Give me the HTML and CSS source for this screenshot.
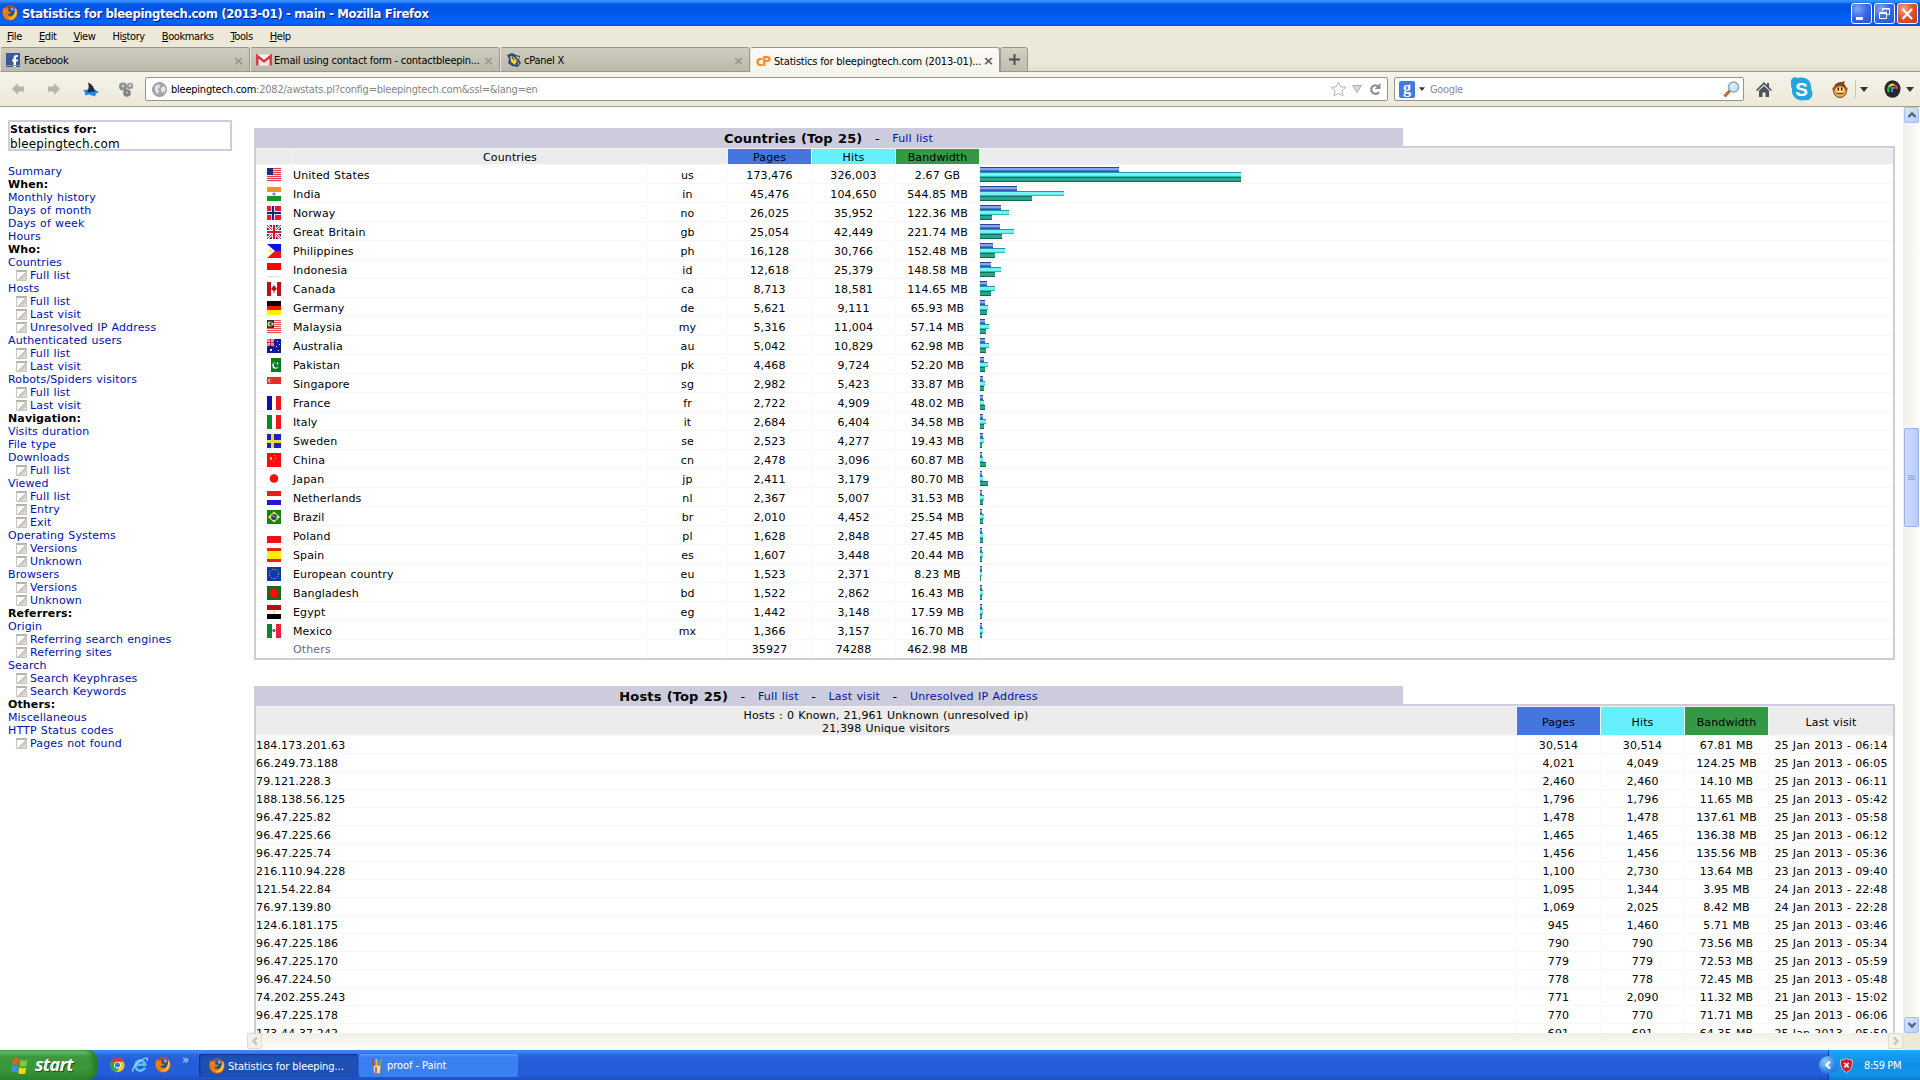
FILE: index.html
```html
<!DOCTYPE html>
<html lang="en">
<head>
  <meta charset="UTF-8" />
  <title>Statistics for bleepingtech.com (2013-01) - main</title>
  <link rel="stylesheet" href="styles.css">
</head>
<body>

  <!-- shared icons -->
  <svg class="defs" width="0" height="0">
    <symbol id="firefox" viewBox="0 0 16 16">
      <circle cx="8" cy="8" r="7.6" fill="#d9570e"/>
      <circle cx="8.4" cy="6.8" r="5.2" fill="#2b4f86"/>
      <path d="M8 3c2-1 4 0 4.500 2L10 6z" fill="#79a7d8"/>
      <path d="M1 3c-1 5 0 9 4 11.500 4 2 9 0 10-5 .5-3 0-5-1.500-7 .5 4-1 8-4.500 8.500-2.500 0-3.500-1-3.500-2l2.500-.5 1.500-1.500-3-.5C6 4.500 6 4 7 3 5 3 4 3.500 3.500 4z" fill="#ee7d14"/>
      <path d="M13.500 2.500c2 4 1.500 8-1.500 10.500-2 1.500-4 1.500-6 .5 4 0 7-3 7.500-11z" fill="#ffc938"/>
    </symbol>
    <symbol id="down" viewBox="0 0 8 5"><path d="M0 0h8L4 5z"/></symbol>
    <symbol id="chev" viewBox="0 0 10 10"><path d="M1.500 7 5 3.500 8.500 7" fill="none" stroke-width="2.400"/></symbol>
  </svg>

  <div class="titlebar">
    <svg class="ico16"><use href="#firefox"/></svg>
    <span class="title">Statistics for bleepingtech.com (2013-01) - main - Mozilla Firefox</span>
    <div class="winbtns">
      <div class="winbtn"><svg width="19" height="20"><path d="M4 13h7v3H4z" fill="#fff"/></svg></div>
      <div class="winbtn"><svg width="19" height="20" fill="none" stroke="#fff"><path d="M7.500 7V4.500h7v6H12M7 5h8"/><path d="M4.500 8.500h7v6h-7zM4 9.500h8"/></svg></div>
      <div class="winbtn close"><svg width="19" height="20"><path d="M4.500 5 14 15M14 5 4.500 15" stroke="#fff" stroke-width="2.200"/></svg></div>
    </div>
  </div>

  <div class="menubar">
    <span><u>F</u>ile</span><span><u>E</u>dit</span><span><u>V</u>iew</span><span>Hi<u>s</u>tory</span><span><u>B</u>ookmarks</span><span><u>T</u>ools</span><span><u>H</u>elp</span>
  </div>

  <div class="tabs">
    <div class="tab">
      <svg class="ico14" viewBox="0 0 14 14"><rect width="14" height="14" fill="#3b5998"/><path d="M7.500 14V8.500H6V6.500h1.500V5c0-2 1-3 2.800-3H12v2h-1c-.8 0-1 .3-1 1v1.500h2L11.700 8.500H10V14z" fill="#fff"/><path d="M0 12.500h14" stroke="#7b92c4"/></svg>
      <span class="label">Facebook</span><span class="x">×</span>
    </div>
    <div class="tab">
      <svg class="ico16" viewBox="0 0 16 16"><path d="M0 2.500h16v11H0z" fill="#f4f1f1"/><path d="M1.300 13.500V4L8 9.500 14.700 4v9.500" fill="none" stroke="#d8323a" stroke-width="2.400"/><path d="M3 13 6.500 9.500M13 13 9.500 9.500" stroke="#ddc8c8"/></svg>
      <span class="label">Email using contact form - contactbleepin...</span><span class="x">×</span>
    </div>
    <div class="tab">
      <svg class="ico16" viewBox="0 0 16 16"><path d="M1 3 6 1l4 2 4 1-1 4 2 3-3 4-6-1-4-3 1-4z" fill="#2a4a86"/><path d="M4 4l4 1 3 4-2 4-4-3zM10 4l3 1-1 3zM11 10l2 1-1 3z" fill="#f6cf3d"/><path d="M6 5l2 3M10 11l2 1" stroke="#1b2440"/></svg>
      <span class="label">cPanel X</span><span class="x">×</span>
    </div>
    <div class="tab active">
      <b class="cp">cP</b>
      <span class="label">Statistics for bleepingtech.com (2013-01)...</span><span class="x">×</span>
    </div>
    <div class="newtab"><svg width="11" height="11"><path d="M5.500 0v11M0 5.500h11" stroke="#4a4f58" stroke-width="2"/></svg></div>
  </div>

  <div class="toolbar">
    <svg class="arrow" viewBox="0 0 14 14"><path d="M7 1 1 7l6 6v-3.500h6v-5H7z" fill="#b7b5ab"/></svg>
    <svg class="arrow" viewBox="0 0 14 14"><path d="M7 1l6 6-6 6v-3.500H1v-5h6z" fill="#b7b5ab"/></svg>
    <svg class="addon" viewBox="0 0 16 16"><path d="M0 9l4-1h8l4 3-3 1-1 3-3-1-3-1-4 1 0-3z" fill="#1d8fe0"/><path d="M5 1c3 1 6 4 7 9l-8 1C6 8 6 4 5 1z" fill="#222c3c"/></svg>
    <svg class="addon" viewBox="0 0 16 16"><circle cx="5" cy="5" r="4" fill="#8d8d8a"/><circle cx="12" cy="4.500" r="3.200" fill="#9b9b98"/><circle cx="9" cy="11.500" r="3.800" fill="#80807d"/><circle cx="5" cy="4.500" r="1.500" fill="#c8c8c4"/><circle cx="12" cy="4" r="1.200" fill="#e0e0dc"/><circle cx="9" cy="11" r="1.200" fill="#b8b8b4"/></svg>
    <div class="urlbar">
      <svg class="ico15" viewBox="0 0 15 15"><circle cx="7.500" cy="7.500" r="6.900" fill="#a9a9a9" stroke="#8d8d8d"/><path d="M3 4l4-2 1 3-2 2 1 3-2 2-2-3zM9 6l3-2 2 3-2 4-3-2z" fill="#e4e4e4"/></svg>
      <span class="url"><em>bleepingtech.com</em>:2082/awstats.pl?config=bleepingtech.com&amp;ssl=&amp;lang=en</span>
      <svg width="17" height="16" viewBox="0 0 17 16"><path d="M8.500 1l2.200 4.700 5.100.6-3.800 3.500 1 5.100-4.500-2.500L4 14.900l1-5.100L1.200 6.300l5.100-.6z" fill="#fff" stroke="#b4b4b4"/></svg>
      <svg class="drop" width="10" height="8" viewBox="0 0 10 8"><path d="M.5.5h9L5 7.500z" fill="#d8d8d8" stroke="#b0b0b0"/></svg>
      <svg width="12" height="13" viewBox="0 0 12 13"><path d="M9.500 3.500A4.300 4.300 0 1 0 10 9" fill="none" stroke="#8b9096" stroke-width="2.200"/><path d="M11.500 0v6h-6z" fill="#8b9096"/></svg>
    </div>
    <div class="searchbar">
      <span class="g">g</span>
      <svg class="tiny"><use href="#down"/></svg>
      <span class="hint">Google</span>
      <svg width="17" height="17" viewBox="0 0 17 17"><path d="M1.500 15.500 7 9.500" stroke="#b86b35" stroke-width="3"/><circle cx="10.500" cy="6" r="5" fill="#cfe8fa" stroke="#8fa9bd" stroke-width="1.600"/><path d="M8 5c.5-1.500 2-2 3-2" stroke="#fff" fill="none"/></svg>
    </div>
    <div class="tools">
      <svg width="16" height="15" viewBox="0 0 16 15"><path d="M8 0 0 8l1.200 1L8 2.600 14.800 9 16 8l-3-3V1h-2v2z" fill="#4c545e"/><path d="M3 8.500 8 4l5 4.500V15H9.500v-4.500h-3V15H3z" fill="#4c545e"/></svg>
      <svg class="skype" width="23" height="24" viewBox="0 0 23 24"><path d="M1 6C0 2 4-1 8 1c8-2 14 3 13 11 4 6-1 13-6 11C7 25 1 19 2 12 1 10 1 8 1 6z" fill="#24a5de"/><text x="11.500" y="18.500" text-anchor="middle">S</text></svg>
      <svg class="monkey" width="16" height="17" viewBox="0 0 16 17"><circle cx="2.200" cy="8" r="2" fill="#a5652a"/><circle cx="13.800" cy="8" r="2" fill="#a5652a"/><path d="M2 7c0-5 5-6 8-6l3-1-1 3c2 1 2 3 2 5z" fill="#8a4513"/><ellipse cx="8" cy="10.500" rx="6.300" ry="6" fill="#f0a94c" stroke="#7c4414"/><path d="M4 8.500c0-3 8-3 8 0l-1 3H5z" fill="#ffdd9b"/><path d="M6.300 6.500v3M9.700 6.500v3" stroke="#2c1a08" stroke-width="1.500"/><path d="M4.500 12.500h7" stroke="#6b3a12"/></svg>
      <i class="sep"></i>
      <svg class="tiny big"><use href="#down"/></svg>
      <svg class="wheel" width="17" height="18" viewBox="0 0 17 18"><ellipse cx="8.500" cy="9" rx="8" ry="8.700" fill="#26282e"/><path d="M5 12a4 4 0 0 1 0-5" stroke="#1fc53a" stroke-width="2" fill="none"/><path d="M5 7a4 4 0 0 1 5-2" stroke="#f1da24" stroke-width="2" fill="none"/><path d="M10 5a4 4 0 0 1 3 4" stroke="#f0433b" stroke-width="2" fill="none"/><path d="M8 12V8h3" stroke="#3b8df2" stroke-width="2" fill="none"/></svg>
      <svg class="tiny big"><use href="#down"/></svg>
    </div>
  </div>

  <div class="page">
    <div class="sidebar">
      <div class="sitebox"><b>Statistics for:</b><br>bleepingtech.com</div>
      <ul class="nav">
        <li><a>Summary</a></li>
        <li class="head">When:</li>
        <li><a>Monthly history</a></li>
        <li><a>Days of month</a></li>
        <li><a>Days of week</a></li>
        <li><a>Hours</a></li>
        <li class="head">Who:</li>
        <li><a>Countries</a></li>
        <li class="sub"><a>Full list</a></li>
        <li><a>Hosts</a></li>
        <li class="sub"><a>Full list</a></li>
        <li class="sub"><a>Last visit</a></li>
        <li class="sub"><a>Unresolved IP Address</a></li>
        <li><a>Authenticated users</a></li>
        <li class="sub"><a>Full list</a></li>
        <li class="sub"><a>Last visit</a></li>
        <li><a>Robots/Spiders visitors</a></li>
        <li class="sub"><a>Full list</a></li>
        <li class="sub"><a>Last visit</a></li>
        <li class="head">Navigation:</li>
        <li><a>Visits duration</a></li>
        <li><a>File type</a></li>
        <li><a>Downloads</a></li>
        <li class="sub"><a>Full list</a></li>
        <li><a>Viewed</a></li>
        <li class="sub"><a>Full list</a></li>
        <li class="sub"><a>Entry</a></li>
        <li class="sub"><a>Exit</a></li>
        <li><a>Operating Systems</a></li>
        <li class="sub"><a>Versions</a></li>
        <li class="sub"><a>Unknown</a></li>
        <li><a>Browsers</a></li>
        <li class="sub"><a>Versions</a></li>
        <li class="sub"><a>Unknown</a></li>
        <li class="head">Referrers:</li>
        <li><a>Origin</a></li>
        <li class="sub"><a>Referring search engines</a></li>
        <li class="sub"><a>Referring sites</a></li>
        <li><a>Search</a></li>
        <li class="sub"><a>Search Keyphrases</a></li>
        <li class="sub"><a>Search Keywords</a></li>
        <li class="head">Others:</li>
        <li><a>Miscellaneous</a></li>
        <li><a>HTTP Status codes</a></li>
        <li class="sub"><a>Pages not found</a></li>
      </ul>
    </div>

    <div class="main">
      <div class="report">
        <div class="section-title"><b>Countries (Top 25)</b><i>-</i><a>Full list</a></div>
        <table class="stats countries">
          <colgroup><col class="c-flag"><col class="c-name"><col class="c-code"><col class="c-num"><col class="c-num"><col class="c-num"><col></colgroup>
          <thead>
            <tr><th></th><th colspan="2">Countries</th><th class="pages">Pages</th><th class="hits">Hits</th><th class="bw">Bandwidth</th><th></th></tr>
          </thead>
          <tbody id="countries"></tbody>
        </table>

        <div class="section-title second"><b>Hosts (Top 25)</b><i>-</i><a>Full list</a><i>-</i><a>Last visit</a><i>-</i><a>Unresolved IP Address</a></div>
        <table class="stats hosts">
          <colgroup><col><col class="c-num"><col class="c-num"><col class="c-num"><col class="c-last"></colgroup>
          <thead>
            <tr><th>Hosts : 0 Known, 21,961 Unknown (unresolved ip)<br>21,398 Unique visitors</th><th class="pages">Pages</th><th class="hits">Hits</th><th class="bw">Bandwidth</th><th>Last visit</th></tr>
          </thead>
          <tbody id="hosts"></tbody>
        </table>
      </div>
      <div class="vscroll">
        <div class="sbtn"><svg width="10" height="10"><use href="#chev"/></svg></div>
        <div class="thumb"><span>≡</span></div>
        <div class="sbtn flip"><svg width="10" height="10"><use href="#chev"/></svg></div>
      </div>
      <div class="hscroll">
        <div class="sbtn off left"><svg width="10" height="10"><use href="#chev"/></svg></div>
        <div class="sbtn off right"><svg width="10" height="10"><use href="#chev"/></svg></div>
      </div>
      <div class="corner"></div>
    </div>
  </div>

  <div class="taskbar">
    <div class="start">
      <svg width="18" height="18" viewBox="0 0 18 18"><path d="M2 3c2-1.500 4-1.500 6 0L7 9C5 7.500 3 7.500 1 9z" fill="#e9582b"/><path d="M9.500 3.500c2 1.500 4 1.500 7 .5l-1 6c-2.500 1-5 1-7-.5z" fill="#86c440"/><path d="M.8 10.500c2-1.500 4-1.500 6 0l-1 6C4 15 2 15 0 16.500z" fill="#4a8fe8"/><path d="M8.200 11c2 1.500 4.500 1.500 7 .5l-1 6c-2.500 1-5 1-7-.5z" fill="#fbd12c"/></svg>
      <span>start</span>
    </div>
    <div class="quick">
      <svg width="15" height="16" viewBox="0 0 16 16"><circle cx="8" cy="8" r="7.600" fill="#f6c81d"/><path d="M8 8 1.300 4.200A7.600 7.600 0 0 1 14.800 4.500H8z" fill="#dd3a2c"/><path d="M1.300 4.200A7.600 7.600 0 0 0 7 15.500L10.500 9.500 8 8z" fill="#33a04b"/><circle cx="8" cy="8" r="3.600" fill="#fff"/><circle cx="8" cy="8" r="2.700" fill="#3c79d0"/></svg>
      <svg width="16" height="16" viewBox="0 0 16 16"><path d="M13 10.500A5 5 0 1 1 13.300 7.800H4" fill="none" stroke="#5fc0f7" stroke-width="2.600"/><path d="M1 14.500C-1 12 8 2 14 1c2 0 1.500 2 1 3" fill="none" stroke="#a7dcfb" stroke-width="1.200"/></svg>
      <svg width="16" height="16"><use href="#firefox"/></svg>
      <span class="more">»</span>
    </div>
    <div class="task on"><svg class="ico16"><use href="#firefox"/></svg><span>Statistics for bleeping...</span></div>
    <div class="task"><svg class="ico16" viewBox="0 0 16 16"><path d="M4 7h8l-1 8.500H5z" fill="#e8dfc8" stroke="#8d7b54" stroke-width=".7"/><path d="M5 8 3 1" stroke="#c8452f" stroke-width="2"/><path d="M7.500 8V1" stroke="#e9b940" stroke-width="2"/><path d="M10 8l2.500-7" stroke="#6fae4c" stroke-width="2"/><path d="M7 9v6" stroke="#c43a2a" stroke-width="1.500"/></svg><span>proof - Paint</span></div>
    <div class="tray">
      <div class="expand"><svg width="10" height="10"><use href="#chev"/></svg></div>
      <svg width="13" height="15" viewBox="0 0 13 15"><path d="M6.500.5c2 1.200 4 1.500 6 1.500 0 6-1 10-6 12.500C1.500 12 .5 8 .5 2c2 0 4-.3 6-1.500z" fill="#c8202a" stroke="#d9b9bd"/><path d="M4.300 5l4.400 4.400M8.700 5 4.300 9.400" stroke="#fff" stroke-width="1.700"/></svg>
      <span class="clock">8:59 PM</span>
    </div>
  </div>

<script src="script.js"></script>
</body>
</html>
```
FILE: styles.css
```css
* {
  box-sizing: border-box;
}

body {
  margin: 0;
  width: 1920px;
  height: 1080px;
  overflow: hidden;
  display: flex;
  flex-direction: column;
  background: #fff;
  font: 11px "DejaVu Sans", Verdana, sans-serif;
  color: #000;
}

svg {
  flex: none;
  display: block;
}

.defs {
  position: absolute;
}

.ico14 { width: 14px; height: 14px; }
.ico15 { width: 15px; height: 15px; }
.ico16 { width: 16px; height: 16px; }

.titlebar, .menubar, .tabs, .toolbar, .taskbar {
  display: flex;
  flex: none;
  font-family: "DejaVu Sans Condensed", Tahoma, sans-serif;
  white-space: nowrap;
}

/* title bar */
.titlebar {
  height: 26px;
  padding: 0 2px;
  align-items: center;
  background: linear-gradient(#3b94ff 0, #2a86fb 2px, #0458e6 4px, #0054e3 9px, #0061fd 20px, #0066ff 23px, #0047d4 26px);
}

.title {
  margin-left: 4px;
  font-size: 13px;
  font-weight: bold;
  letter-spacing: -0.36px;
  color: #fff;
  text-shadow: 1px 1px #0a1883;
}

.winbtns {
  display: flex;
  gap: 2px;
  margin-left: auto;
}

.winbtn {
  width: 21px;
  height: 21px;
  border: 1px solid #fff;
  border-radius: 3px;
  background: radial-gradient(circle at 30% 25%, #7ea4f5, #3467e2 50%, #2456d4);
}

.winbtn.close {
  background: radial-gradient(circle at 30% 25%, #f0a184, #df502c 50%, #c63a13);
}

.menubar {
  height: 21px;
  padding: 0 7px;
  gap: 17px;
  align-items: center;
  background: #ece9d8;
  letter-spacing: -0.4px;
}

/* tabs */
.tabs {
  height: 25px;
  background: linear-gradient(#ece9d8 60%, #e1decf);
  box-shadow: inset 0 -1px #9b988b;
}

.tab {
  display: flex;
  align-items: center;
  width: 250px;
  padding: 1px 5px 0 5px;
  border: 1px solid #9b988b;
  border-left-color: #e5e3d6;
  border-radius: 3px 3px 0 0;
  background: linear-gradient(#cfcdc0, #bbb9ab);
}

.tab .label {
  flex: 1;
  margin-left: 2px;
  padding-top: 1px;
  letter-spacing: -0.25px;
}

.tab .ico14 + .label {
  margin-left: 4px;
}

.tab .x {
  font: bold 13px "DejaVu Sans", sans-serif;
  color: #96958c;
}

.tab.active {
  border-bottom: 0;
  background: linear-gradient(#fbfaf6, #f5f4ec);
}

.tab.active .label {
  letter-spacing: -0.19px;
}

.tab.active .x {
  color: #55565a;
}

.cp {
  width: 16px;
  font: bold 14px "DejaVu Sans Condensed", sans-serif;
  letter-spacing: -1.5px;
  color: #f78d2b;
}

.newtab {
  display: flex;
  align-items: center;
  justify-content: center;
  width: 28px;
  border: 1px solid #9b988b;
  border-radius: 3px 3px 0 0;
  background: linear-gradient(#d3d1c4, #bfbdb0);
}

/* navigation toolbar */
.toolbar {
  height: 35px;
  padding-left: 11px;
  align-items: center;
  background: linear-gradient(#f5f4ec, #ece9d8);
  border-bottom: 1px solid #a09d8e;
}

.arrow {
  width: 14px;
  height: 14px;
  margin-right: 22px;
}

.addon {
  width: 16px;
  height: 17px;
  margin-right: 19px;
}

.urlbar, .searchbar {
  display: flex;
  align-items: center;
  height: 24px;
  border: 1px solid #97948a;
  border-radius: 2px;
  background: #fff;
}

.urlbar {
  width: 1243px;
  margin-left: -8px;
  padding: 0 6px;
}

.url {
  flex: 1;
  margin-left: 4px;
  padding-top: 1px;
  color: #858585;
  letter-spacing: -0.23px;
}

.url em {
  font-style: normal;
  color: #000;
}

.drop {
  margin: 0 7px 0 5px;
}

.searchbar {
  width: 350px;
  margin-left: 6px;
  padding: 0 3px 0 4px;
}

.g {
  width: 16px;
  height: 17px;
  border-radius: 2px;
  background: #3f7be8;
  color: #fff;
  font: bold 16px/13px "Liberation Serif", serif;
  text-align: center;
}

.tiny {
  width: 6px;
  height: 4px;
  margin: 0 5px 0 4px;
  fill: #333;
}

.tiny.big {
  width: 8px;
  height: 5px;
  margin: 0;
}

.hint {
  flex: 1;
  padding-top: 1px;
  color: #8c8c8c;
  letter-spacing: -0.35px;
}

.tools {
  display: flex;
  align-items: center;
  margin-left: 12px;
}

.skype {
  margin: 0 19px 0 18px;
}

.skype text {
  font: bold 19px "Liberation Sans", sans-serif;
  fill: #fff;
}

.sep {
  width: 1px;
  height: 18px;
  margin: 0 4px 0 7px;
  background: #c9c6b7;
}

.wheel {
  margin: 0 5px 0 16px;
}

/* page */
.page {
  display: flex;
  height: 943px;
  letter-spacing: 0.13px;
  word-spacing: 0.5px;
}

.sidebar {
  width: 247px;
  padding: 13px 0 0 8px;
}

a {
  color: #0011aa;
}

.sitebox {
  width: 224px;
  height: 31px;
  border: 2px solid #ccccdd;
  font-size: 12px;
  line-height: 14px;
}

.sitebox b {
  font-size: 11px;
}

.nav {
  margin: 14px 0 0;
  padding: 0;
  list-style: none;
}

.nav li {
  display: flex;
  align-items: center;
  height: 13px;
  line-height: 13px;
}

.nav .head {
  font-weight: bold;
}

.nav .sub::before {
  content: "";
  width: 9px;
  height: 8px;
  margin: 0 3px 0 8px;
  border: 1px solid #c8c8c0;
  border-top: 2px solid #b4b4ac;
  background: linear-gradient(135deg, #fff 50%, #c2c2ba 51%, #e8e8e2);
}

.main {
  display: grid;
  grid-template-columns: 1656px 17px;
  grid-template-rows: 926px 17px;
}

.report {
  padding: 21px 8px 0 7px;
  overflow: hidden;
}

.section-title {
  display: flex;
  justify-content: center;
  align-items: center;
  width: 1149px;
  height: 18px;
  padding-top: 2px;
  background: #ccccdd;
}

.section-title.second {
  margin-top: 26px;
}

.section-title b {
  font-size: 13px;
}

.section-title i {
  margin: 0 12.5px;
  font-style: normal;
  font-size: 13px;
}

.section-title a {
  letter-spacing: 0.2px;
}

.stats {
  width: 1641px;
  table-layout: fixed;
  border: 2px solid #ccccdd;
  border-collapse: separate;
  border-spacing: 0;
}

.c-flag { width: 37px; }
.c-name { width: 355px; }
.c-code { width: 80px; }
.c-num { width: 84px; }
.c-last { width: 124px; }

th, td {
  padding: 2px 0 0;
  border-right: 1px solid #f9f9f9;
  border-bottom: 1px solid #f7f7f7;
  line-height: 13px;
  text-align: center;
  white-space: nowrap;
}

th {
  height: 17px;
  border-top: 1px solid #f4f4f6;
  border-right-color: #f4f4f4;
  background: #ececec;
  font-weight: normal;
}

th:last-child, td:last-child {
  border-right: 0;
}

td {
  height: 19px;
}

.hosts th { height: 30px; }
.hosts td { height: 18px; }

.pages { background: #4477dd; }
.hits { background: #66f0ff; }
.bw { background: #339944; }

td.left {
  text-align: left;
}

.flag {
  width: 14px;
  height: 14px;
  margin: -1px auto 0 11px;
}

td.graph {
  vertical-align: top;
}

.bar {
  height: 5px;
}

.bar.p { background: linear-gradient(#2a4593 1px, #86a5ee 1px, #86a5ee 3px, #5c85dd 3px, #3a63b8 4px, #1d4d9e); }
.bar.h { background: linear-gradient(#22979c 1px, #7cf6f6 1px, #6cf0f0 4px, #2fbcc0 4px); }
.bar.k { background: linear-gradient(#0d6e63 1px, #27ab8b 1px, #27a383 4px, #0b6a52 4px); }

.others td {
  height: 18px;
  padding-top: 0;
  border-bottom: 0;
}

.others td.left {
  color: #666688;
}

/* scrollbars */
.vscroll {
  display: flex;
  flex-direction: column;
  justify-content: space-between;
  align-items: center;
  background: linear-gradient(90deg, #f0efe8, #fdfdf9);
  padding: 0 1px 0 1px;
}

.sbtn {
  display: flex;
  align-items: center;
  justify-content: center;
  width: 15px;
  height: 16px;
  border: 1px solid #a9bdef;
  border-radius: 2px;
  background: linear-gradient(135deg, #dbe6ff, #b7cbf8);
  stroke: #4d6185;
}

.flip svg { transform: rotate(180deg); }
.left svg { transform: rotate(-90deg); }
.right svg { transform: rotate(90deg); }

.thumb {
  width: 15px;
  height: 99px;
  margin-top: 198px;
  margin-bottom: 383px;
  border: 1px solid #98b1ec;
  border-radius: 2px;
  background: linear-gradient(90deg, #cddbfe, #b9cbf7);
  color: #8ca5df;
  text-align: center;
  line-height: 98px;
}

.hscroll {
  display: flex;
  justify-content: space-between;
  background: linear-gradient(#f0efe8, #fdfdf9);
}

.sbtn.off {
  border-color: #dedbcd;
  background: #f3f1e8;
  stroke: #c7c5b9;
}

.corner {
  background: #ece9d8;
}

/* taskbar */
.taskbar {
  height: 30px;
  align-items: stretch;
  color: #fff;
  background: linear-gradient(#3f7fe8 0, #3a84f0 2px, #2a66dd 5px, #245edb 12px, #245edb 24px, #1e4fbf 30px);
}

.start {
  display: flex;
  align-items: center;
  width: 97px;
  padding-left: 11px;
  border-radius: 0 9px 9px 0;
  background: linear-gradient(#5fae5f 0, #76bf74 2px, #3c9a3c 6px, #379637 20px, #2f852f 30px);
  box-shadow: inset -4px 0 4px #2a7a2a;
}

.start span {
  margin: -2px 0 0 6px;
  font: italic bold 18px "Open Sans", sans-serif;
  letter-spacing: -0.7px;
  text-shadow: 1px 1px 1px #1d4a1d;
}

.quick {
  display: flex;
  align-items: center;
  gap: 7px;
  width: 102px;
  padding-left: 13px;
}

.more {
  margin: -12px 0 0 4px;
  font-size: 13px;
  color: #c8dcff;
}

.task {
  display: flex;
  align-items: center;
  width: 159px;
  margin: 4px 1px 3px 0;
  padding-left: 10px;
  border-radius: 2px;
  background: linear-gradient(#5a9bff, #3c81f3 3px, #3a7ff0);
}

.task.on {
  background: #1d50b5;
  box-shadow: inset 1px 1px 2px #10317c;
}

.task span {
  margin-left: 2px;
  letter-spacing: -0.06px;
}

.task.on span {
  margin-left: 3px;
  padding-top: 1px;
}

.tray {
  display: flex;
  align-items: center;
  width: 92px;
  margin-left: auto;
  background: linear-gradient(#1cb0f2 0, #17a0ee 3px, #1290e8 14px, #1191e9 25px, #0f7bd0 30px);
  border-left: 1px solid #123f9c;
}

.expand {
  display: flex;
  align-items: center;
  justify-content: center;
  width: 18px;
  height: 18px;
  margin: 0 3px 0 -10px;
  border-radius: 50%;
  background: radial-gradient(circle at 35% 30%, #8fc9fb, #2b84e6 60%, #1a64cc);
  stroke: #fff;
}

.expand svg {
  transform: rotate(-90deg);
}

.clock {
  margin-left: 11px;
  letter-spacing: -0.4px;
}
```
FILE: script.js
```js
const countries = [
  ['us', 'United States', 173476, 326003, '2.67 GB'],
  ['in', 'India', 45476, 104650, '544.85 MB'],
  ['no', 'Norway', 26025, 35952, '122.36 MB'],
  ['gb', 'Great Britain', 25054, 42449, '221.74 MB'],
  ['ph', 'Philippines', 16128, 30766, '152.48 MB'],
  ['id', 'Indonesia', 12618, 25379, '148.58 MB'],
  ['ca', 'Canada', 8713, 18581, '114.65 MB'],
  ['de', 'Germany', 5621, 9111, '65.93 MB'],
  ['my', 'Malaysia', 5316, 11004, '57.14 MB'],
  ['au', 'Australia', 5042, 10829, '62.98 MB'],
  ['pk', 'Pakistan', 4468, 9724, '52.20 MB'],
  ['sg', 'Singapore', 2982, 5423, '33.87 MB'],
  ['fr', 'France', 2722, 4909, '48.02 MB'],
  ['it', 'Italy', 2684, 6404, '34.58 MB'],
  ['se', 'Sweden', 2523, 4277, '19.43 MB'],
  ['cn', 'China', 2478, 3096, '60.87 MB'],
  ['jp', 'Japan', 2411, 3179, '80.70 MB'],
  ['nl', 'Netherlands', 2367, 5007, '31.53 MB'],
  ['br', 'Brazil', 2010, 4452, '25.54 MB'],
  ['pl', 'Poland', 1628, 2848, '27.45 MB'],
  ['es', 'Spain', 1607, 3448, '20.44 MB'],
  ['eu', 'European country', 1523, 2371, '8.23 MB'],
  ['bd', 'Bangladesh', 1522, 2862, '16.43 MB'],
  ['eg', 'Egypt', 1442, 3148, '17.59 MB'],
  ['mx', 'Mexico', 1366, 3157, '16.70 MB']
];

const hosts = [
  ['184.173.201.63', '30,514', '30,514', '67.81 MB', '25 Jan 2013 - 06:14'],
  ['66.249.73.188', '4,021', '4,049', '124.25 MB', '25 Jan 2013 - 06:05'],
  ['79.121.228.3', '2,460', '2,460', '14.10 MB', '25 Jan 2013 - 06:11'],
  ['188.138.56.125', '1,796', '1,796', '11.65 MB', '25 Jan 2013 - 05:42'],
  ['96.47.225.82', '1,478', '1,478', '137.61 MB', '25 Jan 2013 - 05:58'],
  ['96.47.225.66', '1,465', '1,465', '136.38 MB', '25 Jan 2013 - 06:12'],
  ['96.47.225.74', '1,456', '1,456', '135.56 MB', '25 Jan 2013 - 05:36'],
  ['216.110.94.228', '1,100', '2,730', '13.64 MB', '23 Jan 2013 - 09:40'],
  ['121.54.22.84', '1,095', '1,344', '3.95 MB', '24 Jan 2013 - 22:48'],
  ['76.97.139.80', '1,069', '2,025', '8.42 MB', '24 Jan 2013 - 22:28'],
  ['124.6.181.175', '945', '1,460', '5.71 MB', '25 Jan 2013 - 03:46'],
  ['96.47.225.186', '790', '790', '73.56 MB', '25 Jan 2013 - 05:34'],
  ['96.47.225.170', '779', '779', '72.53 MB', '25 Jan 2013 - 05:59'],
  ['96.47.224.50', '778', '778', '72.45 MB', '25 Jan 2013 - 05:48'],
  ['74.202.255.243', '771', '2,090', '11.32 MB', '21 Jan 2013 - 15:02'],
  ['96.47.225.178', '770', '770', '71.71 MB', '25 Jan 2013 - 06:06'],
  ['173.44.37.242', '691', '691', '64.35 MB', '25 Jan 2013 - 05:50']
];

// small helpers for the 14x14 flags
const r = (x, y, w, h, c) => `<rect x="${x}" y="${y}" width="${w}" height="${h}" fill="${c}"/>`;
const rows3 = (a, b, c) => r(0, 0, 14, 5, a) + r(0, 5, 14, 4, b) + r(0, 9, 14, 5, c);
const cols3 = (a, b, c) => r(0, 0, 5, 14, a) + r(5, 0, 4, 14, b) + r(9, 0, 5, 14, c);
const stripes = c => [0, 2, 4, 6, 8, 10, 12].map(y => r(0, y, 14, 1, c)).join('');
const jack = '<path d="M0 0 14 14M14 0 0 14" stroke="#fff" stroke-width="3"/><path d="M0 0 14 14M14 0 0 14" stroke="#d22030"/>' +
  '<path d="M7 0v14M0 7h14" stroke="#fff" stroke-width="4"/><path d="M7 0v14M0 7h14" stroke="#d8142a" stroke-width="2.2"/>';

const flags = {
  us: r(0, 0, 14, 14, '#fbd9d9') + stripes('#e0404a') + r(0, 0, 6, 7, '#1c2a8c'),
  in: rows3('#f7941e', '#fff', '#0f9b1e') + '<circle cx="7" cy="7" r="1.6" fill="#6a7fc8"/>',
  no: r(0, 0, 14, 14, '#e0202c') + r(4, 0, 4, 14, '#e8dfe8') + r(0, 5, 14, 4, '#e8dfe8') + r(5, 0, 2, 14, '#1c2280') + r(0, 6, 14, 2, '#1c2280'),
  gb: r(0, 0, 14, 14, '#22307f') + jack,
  ph: r(0, 0, 14, 7, '#0814d8') + r(0, 7, 14, 7, '#f0101a') + '<path d="M0 0v14l8-7z" fill="#fffde0"/><circle cx="3" cy="7" r="1.3" fill="#f5e04a"/>',
  id: r(0, 0, 14, 7, '#ff0000') + r(0, 7, 14, 7, '#fff') + r(0, 13, 14, 1, '#ddd'),
  ca: cols3('#c01020', '#fff', '#c01020') + r(4, 0, 1, 14, '#fff') + r(9, 0, 1, 14, '#fff') + '<path d="M7 3l3 4-2.500 2v2h-1V9L4 7z" fill="#c01020"/>',
  de: rows3('#100404', '#f01414', '#fff200'),
  my: r(0, 0, 14, 14, '#fde4e4') + stripes('#e85050') + r(0, 0, 7, 8, '#26305e') + '<circle cx="3" cy="4" r="2.500" fill="#f5e33a"/><circle cx="4" cy="4" r="1.700" fill="#26305e"/><circle cx="5.500" cy="4" r="1.200" fill="#f5e33a"/>',
  au: r(0, 0, 14, 14, '#10189a') + `<g transform="scale(.5)">${jack}</g>` + r(3, 10, 2, 2, '#dfe3ff') + r(10, 2, 1, 1, '#fff') + r(12, 5, 1, 1, '#fff') + r(9, 7, 1, 1, '#fff') + r(11, 11, 1, 1, '#fff'),
  pk: r(0, 0, 4, 14, '#fff') + r(4, 0, 10, 14, '#0a7a20') + '<circle cx="8.500" cy="7.500" r="3.200" fill="#fff"/><circle cx="9.500" cy="6.700" r="2.800" fill="#0a7a20"/><circle cx="10.500" cy="5.500" r=".9" fill="#fff"/>',
  sg: r(0, 0, 14, 7, '#e0302a') + '<circle cx="3" cy="3.500" r="1.900" fill="#f6c4c0"/><circle cx="4" cy="3.500" r="1.500" fill="#e0302a"/>',
  fr: cols3('#0a12a8', '#fff', '#f01818'),
  it: cols3('#0a8a24', '#fff', '#f01818'),
  se: r(0, 0, 14, 14, '#2020c8') + r(4, 0, 3, 14, '#e8d848') + r(0, 6, 14, 3, '#e8d848'),
  cn: r(0, 0, 14, 14, '#f80c0c') + r(3, 4, 2, 3, '#ffd820') + r(7, 2, 1, 1, '#ffb020') + r(8, 4, 1, 1, '#ffb020') + r(8, 6, 1, 1, '#ffb020') + r(6, 8, 1, 1, '#ffb020'),
  jp: '<circle cx="7" cy="6.500" r="4.300" fill="#f80c0c"/>',
  nl: rows3('#f01818', '#fff', '#2a14d8'),
  br: r(0, 0, 14, 14, '#0f8418') + '<path d="M7 1.500 13 7l-6 5.500L1 7z" fill="#f0ea3c"/><circle cx="7" cy="7" r="3" fill="#1c3c8c"/><path d="M4.500 6c2-.5 3.500 0 5 2" stroke="#fff" stroke-width=".6" fill="none"/>',
  pl: r(0, 7, 14, 7, '#f01010'),
  es: r(0, 0, 14, 14, '#e02810') + r(0, 3, 14, 8, '#ffee10'),
  eu: r(0, 0, 14, 14, '#0c38a8') + '<circle cx="7" cy="7" r="4.600" fill="none" stroke="#d8d860" stroke-dasharray="1 1.4"/>',
  bd: r(0, 0, 14, 14, '#0c7018') + '<circle cx="7" cy="7" r="4.700" fill="#f01010"/>',
  eg: rows3('#c80810', '#fff', '#000') + '<circle cx="7" cy="7" r="1.400" fill="#f3d8a8"/>',
  mx: cols3('#0a8434', '#fff', '#e82038') + '<circle cx="7" cy="6.500" r="1.700" fill="#6d7050"/>'
};

const mb = s => parseFloat(s) * (s.endsWith('GB') ? 1024 : 1);
const maxHits = countries[0][3];
const maxBw = mb(countries[0][4]);
const bar = (cls, v) => `<div class="bar ${cls}" style="width:${Math.floor(v * 260) + 1}px"></div>`;

document.getElementById('countries').innerHTML = countries.map(([code, name, pages, hits, bw]) => `
  <tr>
    <td><svg class="flag" viewBox="0 0 14 14">${flags[code]}</svg></td>
    <td class="left">${name}</td>
    <td>${code}</td>
    <td>${pages.toLocaleString('en-US')}</td>
    <td>${hits.toLocaleString('en-US')}</td>
    <td>${bw}</td>
    <td class="graph">${bar('p', pages / maxHits)}${bar('h', hits / maxHits)}${bar('k', mb(bw) / maxBw)}</td>
  </tr>`).join('') + `
  <tr class="others">
    <td></td><td class="left">Others</td><td></td><td>35927</td><td>74288</td><td>462.98 MB</td><td></td>
  </tr>`;

document.getElementById('hosts').innerHTML = hosts.map(([host, ...cells]) =>
  `<tr><td class="left">${host}</td>${cells.map(c => `<td>${c}</td>`).join('')}</tr>`).join('');
```
